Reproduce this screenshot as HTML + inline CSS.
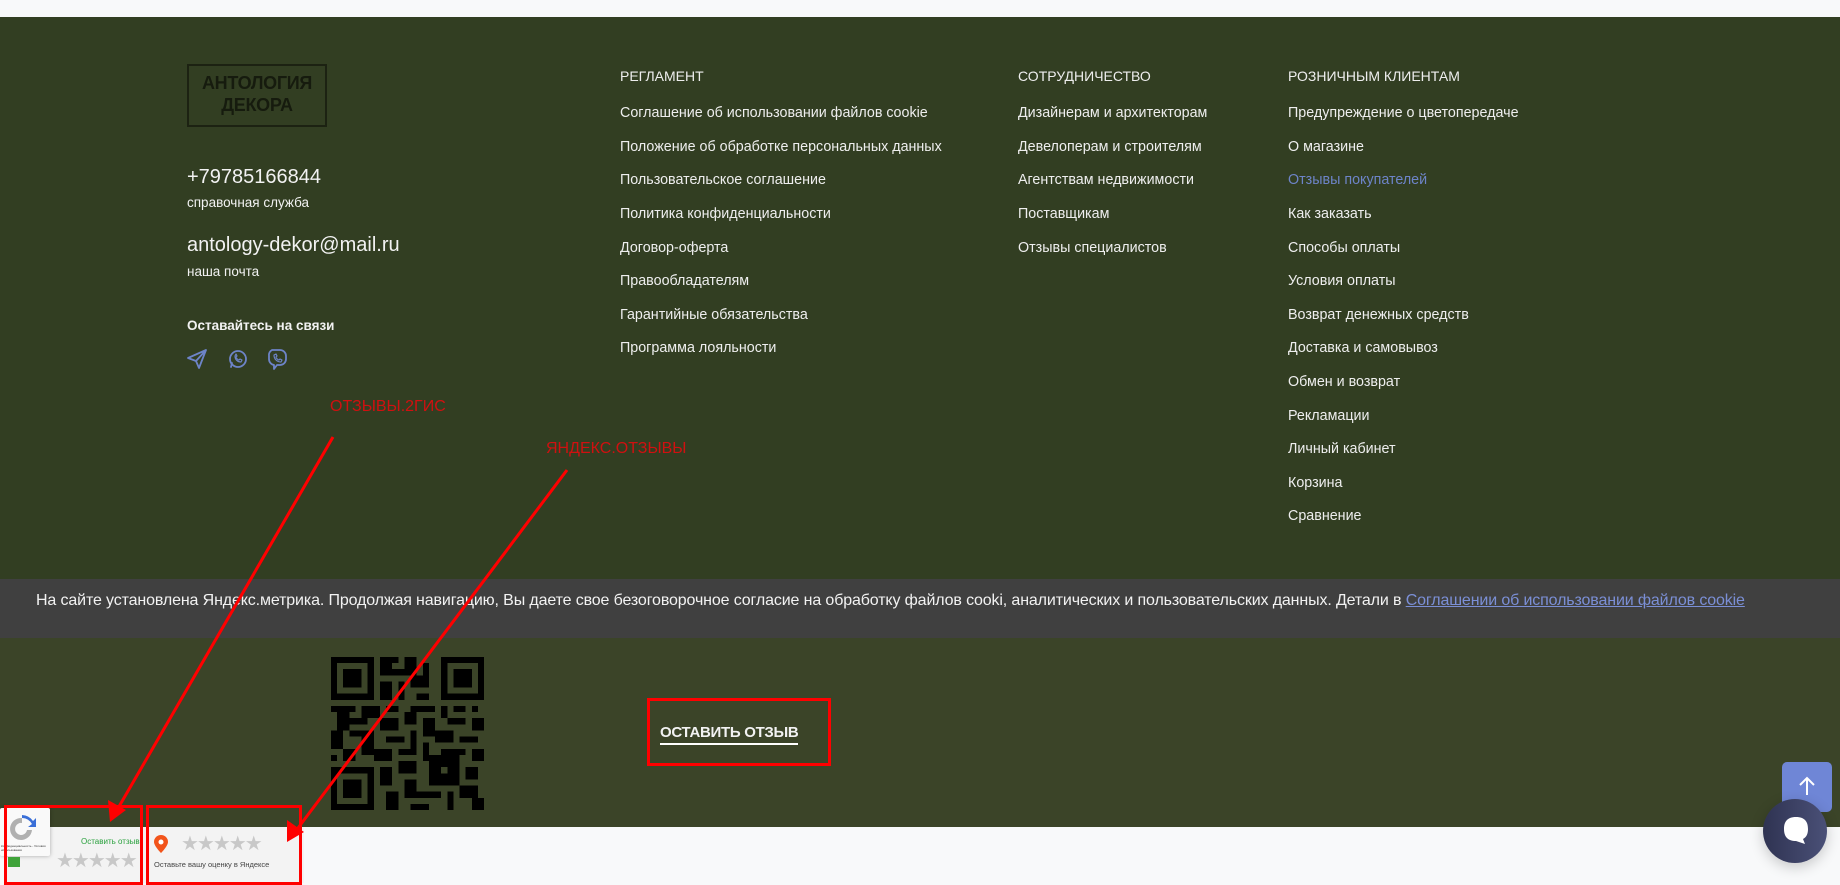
<!DOCTYPE html>
<html><head><meta charset="utf-8"><style>
*{margin:0;padding:0;box-sizing:border-box}
body{width:1840px;height:883px;overflow:hidden;background:#f8f9fa;font-family:"Liberation Sans",sans-serif;position:relative}
.abs{position:absolute}
.top{left:0;top:0;width:1840px;height:17px;background:#f8f9fa}
.f1{left:0;top:17px;width:1840px;height:562px;background:#323e22}
.cb{left:0;top:579px;width:1840px;height:59px;background:#404040}
.f2{left:0;top:638px;width:1840px;height:189px;background:#3b4428}
.t{color:#f2f2f2;white-space:nowrap}
.col div{position:absolute;left:0;font-size:14.3px;color:#eee;white-space:nowrap;line-height:16px}
.col .h{font-size:14px;text-transform:uppercase}
.red{border:3px solid #f00}
.rt{color:#d01010;font-size:16px;white-space:nowrap}
</style></head><body>
<div class="abs top"></div>
<div class="abs f1"></div>
<div class="abs cb"></div>
<div class="abs f2"></div>

<div class="abs" style="left:187px;top:64px;width:140px;height:63px;border:2px solid #1c2212"></div>
<div class="abs" style="left:187px;top:72px;width:140px;text-align:center;font-weight:bold;font-size:18px;line-height:22px;color:#161b0e;letter-spacing:-0.3px">АНТОЛОГИЯ<br>ДЕКОРА</div>

<div class="abs t" style="left:187px;top:166px;font-size:20px">+79785166844</div>
<div class="abs t" style="left:187px;top:195px;font-size:13.5px">справочная служба</div>
<div class="abs t" style="left:187px;top:234px;font-size:20px">antology-dekor@mail.ru</div>
<div class="abs t" style="left:187px;top:264px;font-size:13.5px">наша почта</div>
<div class="abs t" style="left:187px;top:318px;font-size:13.5px;font-weight:bold">Оставайтесь на связи</div>
<svg class="abs" style="left:186px;top:346px" width="110" height="26" viewBox="0 0 110 26" fill="none" stroke="#6d84c8" stroke-width="1.8" stroke-linejoin="round" stroke-linecap="round">
<path d="M2 12 L20 4 L13 22 L10 15 Z M10 15 L20 4"/>
<circle cx="52" cy="13" r="8"/><path d="M45 21 l1-4"/><path d="M49 10 c0 4 3 6 6 6 l1-2 -2-1 -1 1 c-1 0-3-2-3-3 l1-1 -1-2z" stroke-width="1.2"/>
<path d="M86 4 h8 a6 6 0 0 1 6 6 v3 a6 6 0 0 1 -6 6 h-3 l-3 4 v-4 a6 6 0 0 1 -5 -6 v-3 a6 6 0 0 1 3 -6z"/><path d="M88 9 c0 4 3 7 7 7 l1-2 -2-1 -1 1 c-1 0-3-2-3-3 l1-1 -1-2z" stroke-width="1.2"/>
</svg>

<div class="abs col" style="left:620px;top:1px">
<div class="h" style="top:67px">Регламент</div>
<div style="top:104px">Соглашение об использовании файлов cookie</div>
<div style="top:138px">Положение об обработке персональных данных</div>
<div style="top:171px">Пользовательское соглашение</div>
<div style="top:205px">Политика конфиденциальности</div>
<div style="top:239px">Договор-оферта</div>
<div style="top:272px">Правообладателям</div>
<div style="top:306px">Гарантийные обязательства</div>
<div style="top:339px">Программа лояльности</div>
</div>
<div class="abs col" style="left:1018px;top:1px">
<div class="h" style="top:67px">Сотрудничество</div>
<div style="top:104px">Дизайнерам и архитекторам</div>
<div style="top:138px">Девелоперам и строителям</div>
<div style="top:171px">Агентствам недвижимости</div>
<div style="top:205px">Поставщикам</div>
<div style="top:239px">Отзывы специалистов</div>
</div>
<div class="abs col" style="left:1288px;top:1px">
<div class="h" style="top:67px">Розничным клиентам</div>
<div style="top:104px">Предупреждение о цветопередаче</div>
<div style="top:138px">О магазине</div>
<div style="top:171px;color:#6d84c8">Отзывы покупателей</div>
<div style="top:205px">Как заказать</div>
<div style="top:239px">Способы оплаты</div>
<div style="top:272px">Условия оплаты</div>
<div style="top:306px">Возврат денежных средств</div>
<div style="top:339px">Доставка и самовывоз</div>
<div style="top:373px">Обмен и возврат</div>
<div style="top:407px">Рекламации</div>
<div style="top:440px">Личный кабинет</div>
<div style="top:474px">Корзина</div>
<div style="top:507px">Сравнение</div>
</div>

<div class="abs t" style="left:36px;top:592px;font-size:16px;letter-spacing:-0.13px">На сайте установлена Яндекс.метрика. Продолжая навигацию, Вы даете свое безоговорочное согласие на обработку файлов cooki, аналитических и пользовательских данных. Детали в <span style="color:#7b8fd6;text-decoration:underline">Соглашении об использовании файлов cookie</span></div>

<svg class="abs" style="left:331px;top:657px" width="153" height="153" viewBox="0 0 25 25" shape-rendering="crispEdges">
<g fill="#000">
<path d="M0 0h7v7h-7zM1 1v5h5v-5zM2 2h3v3h-3z" fill-rule="evenodd"/>
<path d="M18 0h7v7h-7zM19 1v5h5v-5zM20 2h3v3h-3z" fill-rule="evenodd"/>
<path d="M0 18h7v7h-7zM1 19v5h5v-5zM2 20h3v3h-3z" fill-rule="evenodd"/>
<rect x="8" y="0" width="3" height="1"/><rect x="12" y="0" width="2" height="2"/><rect x="8" y="1" width="2" height="2"/><rect x="10" y="2" width="4" height="1"/><rect x="13" y="3" width="3" height="2"/><rect x="8" y="4" width="2" height="3"/><rect x="11" y="4" width="1" height="3"/><rect x="14" y="6" width="2" height="1"/><rect x="15" y="1" width="1" height="2"/>
<rect x="0" y="8" width="4" height="1"/><rect x="5" y="8" width="3" height="2"/><rect x="9" y="8" width="2" height="1"/><rect x="13" y="8" width="4" height="1"/><rect x="18" y="8" width="1" height="2"/><rect x="20" y="8" width="2" height="1"/><rect x="23" y="8" width="1" height="1"/>
<rect x="1" y="9" width="2" height="3"/><rect x="3" y="10" width="3" height="1"/><rect x="8" y="10" width="3" height="2"/><rect x="12" y="9" width="2" height="2"/><rect x="15" y="10" width="2" height="3"/><rect x="19" y="10" width="3" height="1"/><rect x="23" y="10" width="2" height="2"/>
<rect x="0" y="12" width="2" height="3"/><rect x="3" y="12" width="4" height="1"/><rect x="5" y="13" width="2" height="3"/><rect x="9" y="13" width="3" height="1"/><rect x="13" y="12" width="1" height="3"/><rect x="17" y="12" width="3" height="2"/><rect x="21" y="13" width="3" height="1"/>
<rect x="2" y="15" width="2" height="2"/><rect x="7" y="15" width="3" height="2"/><rect x="11" y="15" width="3" height="1"/><rect x="15" y="14" width="1" height="3"/><rect x="18" y="15" width="4" height="1"/><rect x="23" y="15" width="2" height="2"/><rect x="0" y="16" width="1" height="1"/>
<rect x="8" y="18" width="2" height="3"/><rect x="11" y="17" width="3" height="2"/><rect x="16" y="16" width="5" height="5"/><rect x="22" y="18" width="2" height="2"/><rect x="12" y="20" width="2" height="3"/><rect x="9" y="22" width="2" height="3"/><rect x="14" y="22" width="4" height="1"/><rect x="19" y="22" width="1" height="3"/><rect x="21" y="21" width="3" height="2"/><rect x="23" y="23" width="2" height="2"/><rect x="13" y="24" width="3" height="1"/>
</g>
<rect x="18" y="18" width="1" height="1" fill="#3b4428"/>
</svg>

<div class="abs red" style="left:647px;top:698px;width:184px;height:68px"></div>
<div class="abs t" style="left:660px;top:724px;font-size:15px;font-weight:bold;border-bottom:2px solid #fff;padding-bottom:2px;letter-spacing:-0.3px">ОСТАВИТЬ ОТЗЫВ</div>

<div class="abs" style="left:1782px;top:762px;width:50px;height:50px;background:#6f86d6;border-radius:5px"></div>
<svg class="abs" style="left:1795px;top:774px" width="24" height="24" viewBox="0 0 24 24" fill="none" stroke="#fff" stroke-width="2"><path d="M12 21V4M5 11l7-7 7 7"/></svg>
<div class="abs" style="left:1763px;top:799px;width:64px;height:64px;border-radius:50%;background:linear-gradient(90deg,#2f3352,#4a5077);box-shadow:0 4px 14px rgba(0,0,0,.2)"></div>
<svg class="abs" style="left:1781px;top:815px" width="30" height="32" viewBox="0 0 30 32"><path d="M15 2 C6 2 3 7 3 14 C3 22 7 26 15 26 L24 29 L22 24 C26 22 27 18 27 14 C27 7 24 2 15 2Z" fill="#fff"/></svg>

<div class="abs" style="left:4px;top:827px;width:300px;height:56px;background:#f3f3f3"></div>
<div class="abs" style="left:0;top:808px;width:50px;height:48px;background:#f9f9f9;box-shadow:0 0 4px rgba(0,0,0,.3);border-radius:2px"></div>
<svg class="abs" style="left:8px;top:815px" width="28" height="28" viewBox="0 0 28 28"><path d="M14 3a11 11 0 0 1 10 6l-4 3h8V3l-3 3A14 14 0 0 0 14 0z" fill="#3a6fd8"/><path d="M14 3a11 11 0 1 0 10 12h-5a6 6 0 1 1-5-7V3z" fill="#b0b0b0"/></svg>
<div class="abs" style="left:1px;top:844px;font-size:3px;color:#333;width:48px">Конфиденциальность - Условия использования</div>
<div class="abs" style="left:8px;top:857px;width:12px;height:10px;background:#3fa33a"></div>
<div class="abs" style="left:81px;top:837px;font-size:8px;color:#2aa13e">Оставить отзыв</div>
<div class="abs" style="left:56px;top:848px;font-size:20px;color:#c8c8c8;letter-spacing:-2px">★★★★★</div>
<svg class="abs" style="left:154px;top:835px" width="14" height="18" viewBox="0 0 14 18"><path d="M7 0a7 7 0 0 0-7 7c0 4 7 11 7 11s7-7 7-11a7 7 0 0 0-7-7z" fill="#f2541b"/><circle cx="7" cy="7" r="2.5" fill="#fff"/></svg>
<div class="abs" style="left:181px;top:831px;font-size:20px;color:#c8c8c8;letter-spacing:-2px">★★★★★</div>
<div class="abs" style="left:154px;top:860px;font-size:7.5px;color:#444">Оставьте вашу оценку в Яндексе</div>

<div class="abs red" style="left:4px;top:805px;width:139px;height:80px"></div>
<div class="abs red" style="left:146px;top:805px;width:156px;height:80px"></div>

<div class="abs rt" style="left:330px;top:398px">ОТЗЫВЫ.2ГИС</div>
<div class="abs rt" style="left:546px;top:440px">ЯНДЕКС.ОТЗЫВЫ</div>
<svg class="abs" style="left:0;top:0" width="1840" height="883" viewBox="0 0 1840 883">
<g stroke="#f00" stroke-width="3" fill="#f00">
<line x1="333" y1="437" x2="117" y2="810"/><polygon points="110,822 108,800 126,810" stroke="none"/>
<line x1="567" y1="470" x2="295" y2="832"/><polygon points="287,842 287,820 304,832" stroke="none"/>
</g></svg>
</body></html>
